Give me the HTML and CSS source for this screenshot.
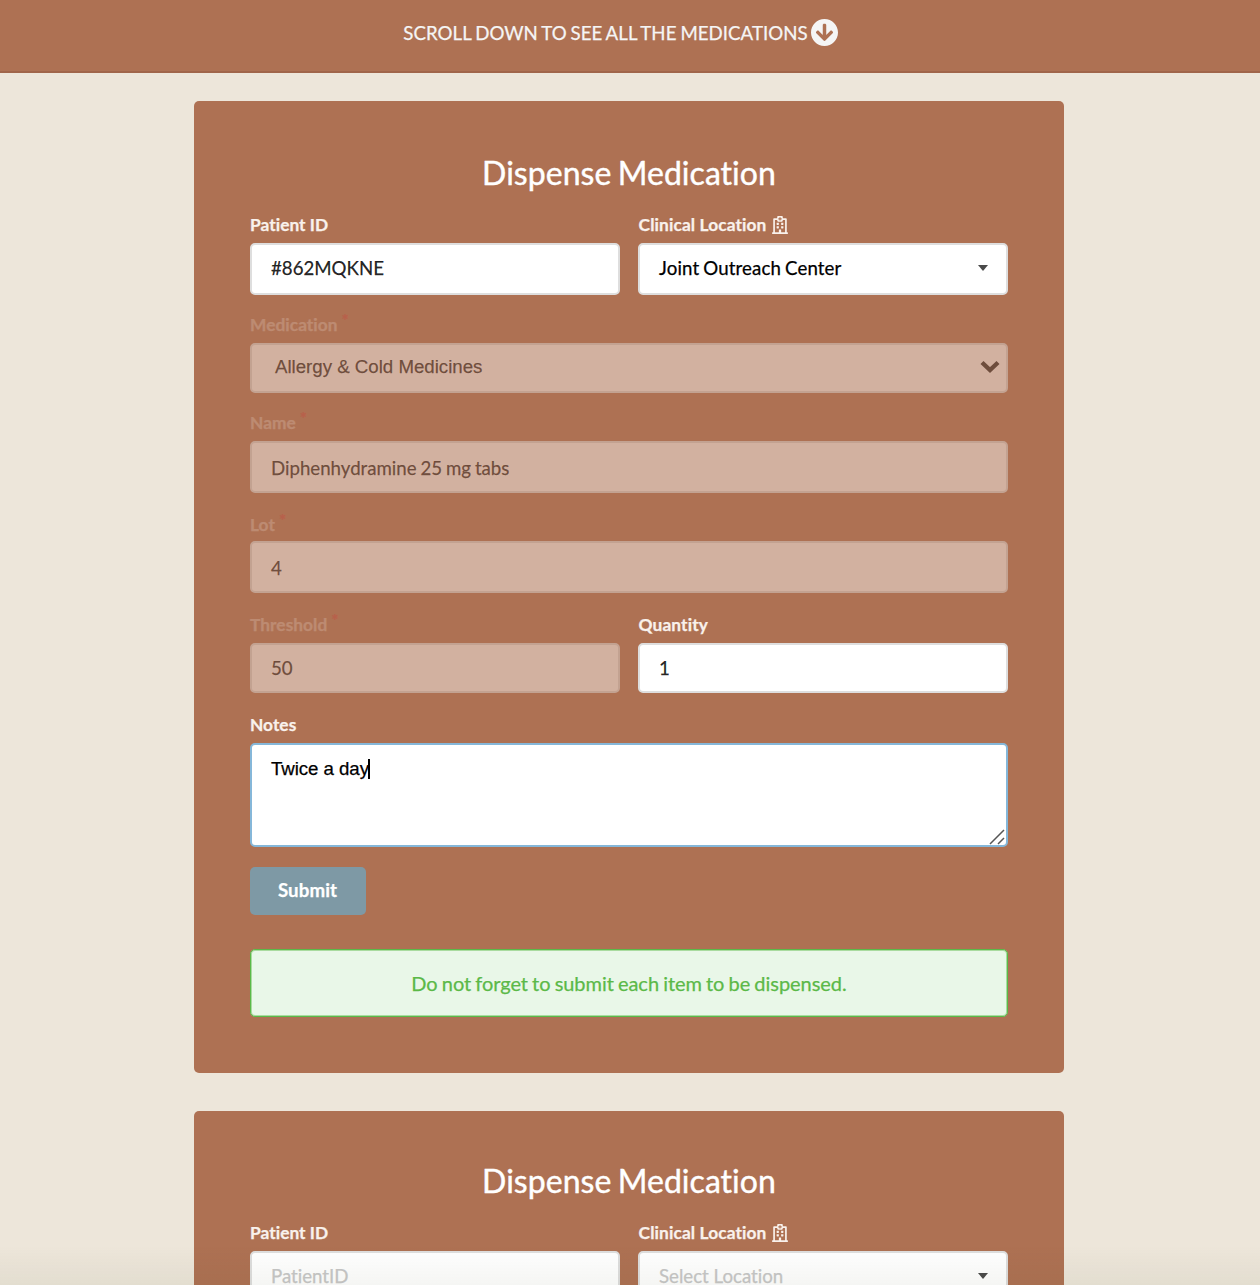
FILE: index.html
```html
<!DOCTYPE html>
<html lang="en">
<head>
<meta charset="utf-8">
<title>Dispense Medication</title>
<link rel="stylesheet" href="styles.css">
</head>
<body>
<svg class="sprite" width="0" height="0">
  <symbol id="hospital" viewBox="0 0 448 512"><path d="M128 244v-40c0-6.627 5.373-12 12-12h40c6.627 0 12 5.373 12 12v40c0 6.627-5.373 12-12 12h-40c-6.627 0-12-5.373-12-12zm140 12h40c6.627 0 12-5.373 12-12v-40c0-6.627-5.373-12-12-12h-40c-6.627 0-12 5.373-12 12v40c0 6.627 5.373 12 12 12zm-76 84v-40c0-6.627-5.373-12-12-12h-40c-6.627 0-12 5.373-12 12v40c0 6.627 5.373 12 12 12h40c6.627 0 12-5.373 12-12zm76 12h40c6.627 0 12-5.373 12-12v-40c0-6.627-5.373-12-12-12h-40c-6.627 0-12 5.373-12 12v40c0 6.627 5.373 12 12 12zm180 124v36H0v-36c0-6.627 5.373-12 12-12h19.5V85.035C31.5 73.418 42.245 64 55.5 64H144V24c0-13.255 10.745-24 24-24h112c13.255 0 24 10.745 24 24v40h88.5c13.255 0 24 9.418 24 21.035V464H436c6.627 0 12 5.373 12 12zM79.5 463H192v-67c0-6.627 5.373-12 12-12h40c6.627 0 12 5.373 12 12v67h112.5V112H304v24c0 13.255-10.745 24-24 24H168c-13.255 0-24-10.745-24-24v-24H79.5v351zM266 64h-26V38a6 6 0 0 0-6-6h-20a6 6 0 0 0-6 6v26h-26a6 6 0 0 0-6 6v20a6 6 0 0 0 6 6h26v26a6 6 0 0 0 6 6h20a6 6 0 0 0 6-6V96h26a6 6 0 0 0 6-6V70a6 6 0 0 0-6-6z"/></symbol>
</svg>
<header class="banner">
  <span class="banner-text">SCROLL DOWN TO SEE ALL THE MEDICATIONS</span>
  <svg class="banner-icon" viewBox="8 8 496 496"><path d="M504 256c0 137-111 248-248 248S8 393 8 256 119 8 256 8s248 111 248 248zm-143.6-28.9L288 302.6V120c0-13.3-10.7-24-24-24h-16c-13.3 0-24 10.7-24 24v182.6l-72.4-75.5c-9.3-9.7-24.8-9.9-34.3-.4l-10.9 11c-9.4 9.4-9.4 24.6 0 33.9L239 404.3c9.4 9.4 24.6 9.4 33.9 0l132.7-132.7c9.4-9.4 9.4-24.6 0-33.9l-10.9-11c-9.5-9.5-25-9.3-34.3.4z"/></svg>
</header>
<main class="page">
  <section class="card">
    <h1 class="title">Dispense Medication</h1>
    <div class="row">
      <div class="field">
        <label class="label">Patient ID</label>
        <div class="control">#862MQKNE</div>
      </div>
      <div class="field">
        <label class="label wide">Clinical Location <svg class="hospital"><use href="#hospital"/></svg></label>
        <div class="control dropdown chosen"><span>Joint Outreach Center</span><i class="caret"></i></div>
      </div>
    </div>
    <div class="field disabled">
      <label class="label">Medication<sup class="req">*</sup></label>
      <div class="control native short"><span>Allergy &amp; Cold Medicines</span>
        <svg class="chevron" viewBox="0 0 20 14"><path d="M2 2.5 10 10 18 2.5"/></svg></div>
    </div>
    <div class="field disabled">
      <label class="label">Name<sup class="req">*</sup></label>
      <div class="control low">Diphenhydramine 25 mg tabs</div>
    </div>
    <div class="field disabled lot">
      <label class="label">Lot<sup class="req">*</sup></label>
      <div class="control low">4</div>
    </div>
    <div class="row spaced">
      <div class="field disabled">
        <label class="label">Threshold<sup class="req">*</sup></label>
        <div class="control short">50</div>
      </div>
      <div class="field">
        <label class="label wide">Quantity</label>
        <div class="control short">1</div>
      </div>
    </div>
    <div class="field spaced">
      <label class="label">Notes</label>
      <div class="control notes"><span>Twice a day</span><i class="cursor"></i>
        <svg class="grip" viewBox="0 0 16 16"><path d="M1 15 15 1M9 15 15 9"/></svg></div>
    </div>
    <button class="submit" type="button">Submit</button>
    <div class="message"><span>Do not forget to submit each item to be dispensed.</span></div>
  </section>
  <section class="card next">
    <h1 class="title">Dispense Medication</h1>
    <div class="row">
      <div class="field">
        <label class="label">Patient ID</label>
        <div class="control placeholder">PatientID</div>
      </div>
      <div class="field">
        <label class="label wide">Clinical Location <svg class="hospital"><use href="#hospital"/></svg></label>
        <div class="control dropdown placeholder"><span>Select Location</span><i class="caret"></i></div>
      </div>
    </div>
  </section>
</main>
<div class="fade"></div>
</body>
</html>
```
FILE: styles.css
```css
* { box-sizing: border-box; }
html, body { height: 100%; }
body {
  margin: 0;
  overflow: hidden;
  background: #ede6da;
  font: 18.67px/24px Lato, "Liberation Sans", sans-serif;
  font-variant-ligatures: none;
  -webkit-text-stroke: .25px currentColor;
  color: rgba(0, 0, 0, .87);
}
.sprite { display: block; }
.banner {
  display: flex;
  justify-content: center;
  align-items: flex-start;
  gap: 3px;
  height: 73px;
  padding: 19px 19px 0 0;
  background: #ae7153;
  border-bottom: 2px solid #a0654a;
  color: whitesmoke;
}
.banner-text { line-height: 28px; letter-spacing: .04px; word-spacing: -.9px; white-space: nowrap; }
.banner-icon { width: 27px; height: 27px; fill: currentColor; }
.page {
  display: flex;
  flex-direction: column;
  gap: 38px;
  width: 870px;
  margin: 28px 0 0 194px;
}
.card {
  flex: none;
  height: 972px;
  padding: 52px 56px 56px;
  border-radius: 5px;
  background: #ae7153;
}
.card.next { padding-top: 50px; }
.title {
  margin: 0 0 22px;
  font-size: 32px;
  font-weight: 400;
  line-height: 40px;
  letter-spacing: .03px;
  word-spacing: -1.8px;
  text-align: center;
  color: #fff;
  -webkit-text-stroke: .4px currentColor;
}
.row { display: grid; grid-template-columns: 1fr 1fr; gap: 18px; }
.field { display: flex; flex-direction: column; }
.card > .field { margin-top: 20px; }
.card > .spaced, .card > .lot { margin-top: 22px; }
.label {
  height: 28px;
  line-height: 20px;
  font-size: 17.33px;
  font-weight: 700;
  letter-spacing: .04px;
  color: #f9f1ec;
}
.label.wide { padding-left: .6px; letter-spacing: .1px; }
.lot .label { height: 26px; }
.hospital { width: 16px; height: 18px; margin-left: 1px; fill: currentColor; vertical-align: -3px; -webkit-text-stroke: 0; stroke: none; }
.req { margin-left: 4px; font-size: 17px; line-height: 0; vertical-align: 4px; color: #db2828; }
.control {
  display: flex;
  align-items: center;
  height: 52px;
  padding: 0 19px 2px;
  border: 2px solid #dedede;
  border-radius: 5px;
  background: #fff;
  white-space: nowrap;
}
.short { height: 50px; padding-bottom: 0; }
.low { padding: 2px 19px 0; word-spacing: -.9px; }
.dropdown { justify-content: space-between; padding-right: 18px; }
.chosen { color: #000; letter-spacing: .13px; word-spacing: -.9px; }
.placeholder { color: #c7c7c7; }
.caret {
  border: 5px solid transparent;
  border-top: 6px solid #4a4a4a;
  border-bottom: 0;
}
.disabled .control { opacity: .45; }
.disabled .label { opacity: .2; }
.disabled .req { color: #e0202c; }
.native {
  justify-content: space-between;
  padding: 0 6px 2px 23px;
  font-family: "Liberation Sans", sans-serif;
}
.chevron { width: 20px; height: 14px; fill: none; stroke: #222; stroke-width: 4.4; }
.notes {
  position: relative;
  align-items: flex-start;
  height: 104px;
  padding-top: 12px;
  border-color: #85b7d9;
  font-family: "Liberation Sans", sans-serif;
  letter-spacing: -.05px;
  color: #000;
}
.cursor { width: 2px; height: 20px; margin: 2px 0 0 -1px; background: #000; }
.grip {
  position: absolute;
  right: 1px;
  bottom: 0;
  width: 16px;
  height: 16px;
  fill: none;
  stroke: #555;
  stroke-width: 1.5;
}
.submit {
  display: block;
  width: 116px;
  height: 48px;
  margin-top: 20px;
  padding: 0 1px 2px 0;
  border: 0;
  border-radius: 5px;
  background: #7e99a5;
  color: #fff;
  font: 700 18.67px/20px Lato, sans-serif;
  letter-spacing: .1px;
}
.message {
  display: flex;
  align-items: center;
  justify-content: center;
  height: 68px;
  margin-top: 34px;
  border: 1px solid #5bb948;
  border-radius: 5px;
  background: #e9f7e8;
  box-shadow: inset 0 0 0 1px rgba(91, 185, 72, .45);
  color: #5bb948;
  font-size: 20px;
  letter-spacing: -.04px;
  word-spacing: -.95px;
}
.fade {
  position: fixed;
  left: 0;
  right: 0;
  bottom: 0;
  height: 40px;
  background: linear-gradient(rgba(60, 70, 30, 0), rgba(60, 70, 30, .05));
}
```
